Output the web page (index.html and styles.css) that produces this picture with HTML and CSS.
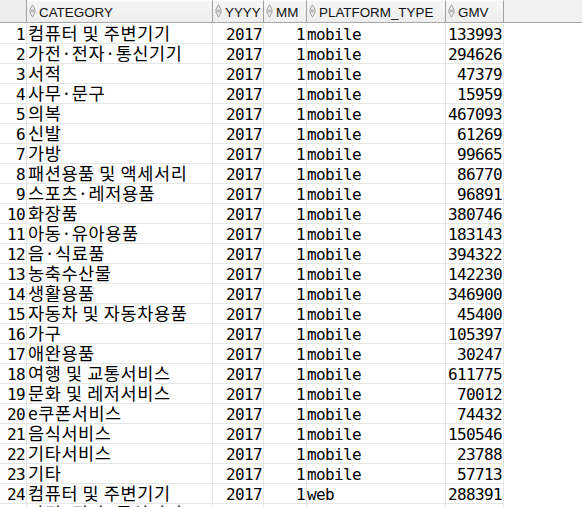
FILE: index.html
```html
<!DOCTYPE html>
<html>
<head>
<meta charset="utf-8">
<link rel="stylesheet" href="styles.css">
</head>
<body>
<div class="grid">
  <div class="head">
    <div class="hc hrn"></div>
    <div class="hc"><svg class="sort" viewBox="0 0 7 14" width="7" height="14"><path d="M3.5 0.8 L6.4 6.2 L0.6 6.2 Z M0.6 7.8 L6.4 7.8 L3.5 13.2 Z"/></svg><span class="hl">CATEGORY</span></div>
    <div class="hc"><svg class="sort" viewBox="0 0 7 14" width="7" height="14"><path d="M3.5 0.8 L6.4 6.2 L0.6 6.2 Z M0.6 7.8 L6.4 7.8 L3.5 13.2 Z"/></svg><span class="hl">YYYY</span></div>
    <div class="hc"><svg class="sort" viewBox="0 0 7 14" width="7" height="14"><path d="M3.5 0.8 L6.4 6.2 L0.6 6.2 Z M0.6 7.8 L6.4 7.8 L3.5 13.2 Z"/></svg><span class="hl">MM</span></div>
    <div class="hc"><svg class="sort" viewBox="0 0 7 14" width="7" height="14"><path d="M3.5 0.8 L6.4 6.2 L0.6 6.2 Z M0.6 7.8 L6.4 7.8 L3.5 13.2 Z"/></svg><span class="hl">PLATFORM_TYPE</span></div>
    <div class="hc"><svg class="sort" viewBox="0 0 7 14" width="7" height="14"><path d="M3.5 0.8 L6.4 6.2 L0.6 6.2 Z M0.6 7.8 L6.4 7.8 L3.5 13.2 Z"/></svg><span class="hl">GMV</span></div>
    <div class="hfill"></div>
  </div>
  <div class="body">
    <div class="row"><div class="c num">1</div><div class="c cat">컴퓨터 및 주변기기</div><div class="c num">2017</div><div class="c num">1</div><div class="c plat">mobile</div><div class="c num">133993</div></div>
    <div class="row"><div class="c num">2</div><div class="c cat">가전·전자·통신기기</div><div class="c num">2017</div><div class="c num">1</div><div class="c plat">mobile</div><div class="c num">294626</div></div>
    <div class="row"><div class="c num">3</div><div class="c cat">서적</div><div class="c num">2017</div><div class="c num">1</div><div class="c plat">mobile</div><div class="c num">47379</div></div>
    <div class="row"><div class="c num">4</div><div class="c cat">사무·문구</div><div class="c num">2017</div><div class="c num">1</div><div class="c plat">mobile</div><div class="c num">15959</div></div>
    <div class="row"><div class="c num">5</div><div class="c cat">의복</div><div class="c num">2017</div><div class="c num">1</div><div class="c plat">mobile</div><div class="c num">467093</div></div>
    <div class="row"><div class="c num">6</div><div class="c cat">신발</div><div class="c num">2017</div><div class="c num">1</div><div class="c plat">mobile</div><div class="c num">61269</div></div>
    <div class="row"><div class="c num">7</div><div class="c cat">가방</div><div class="c num">2017</div><div class="c num">1</div><div class="c plat">mobile</div><div class="c num">99665</div></div>
    <div class="row"><div class="c num">8</div><div class="c cat">패션용품 및 액세서리</div><div class="c num">2017</div><div class="c num">1</div><div class="c plat">mobile</div><div class="c num">86770</div></div>
    <div class="row"><div class="c num">9</div><div class="c cat">스포츠·레저용품</div><div class="c num">2017</div><div class="c num">1</div><div class="c plat">mobile</div><div class="c num">96891</div></div>
    <div class="row"><div class="c num">10</div><div class="c cat">화장품</div><div class="c num">2017</div><div class="c num">1</div><div class="c plat">mobile</div><div class="c num">380746</div></div>
    <div class="row"><div class="c num">11</div><div class="c cat">아동·유아용품</div><div class="c num">2017</div><div class="c num">1</div><div class="c plat">mobile</div><div class="c num">183143</div></div>
    <div class="row"><div class="c num">12</div><div class="c cat">음·식료품</div><div class="c num">2017</div><div class="c num">1</div><div class="c plat">mobile</div><div class="c num">394322</div></div>
    <div class="row"><div class="c num">13</div><div class="c cat">농축수산물</div><div class="c num">2017</div><div class="c num">1</div><div class="c plat">mobile</div><div class="c num">142230</div></div>
    <div class="row"><div class="c num">14</div><div class="c cat">생활용품</div><div class="c num">2017</div><div class="c num">1</div><div class="c plat">mobile</div><div class="c num">346900</div></div>
    <div class="row"><div class="c num">15</div><div class="c cat">자동차 및 자동차용품</div><div class="c num">2017</div><div class="c num">1</div><div class="c plat">mobile</div><div class="c num">45400</div></div>
    <div class="row"><div class="c num">16</div><div class="c cat">가구</div><div class="c num">2017</div><div class="c num">1</div><div class="c plat">mobile</div><div class="c num">105397</div></div>
    <div class="row"><div class="c num">17</div><div class="c cat">애완용품</div><div class="c num">2017</div><div class="c num">1</div><div class="c plat">mobile</div><div class="c num">30247</div></div>
    <div class="row"><div class="c num">18</div><div class="c cat">여행 및 교통서비스</div><div class="c num">2017</div><div class="c num">1</div><div class="c plat">mobile</div><div class="c num">611775</div></div>
    <div class="row"><div class="c num">19</div><div class="c cat">문화 및 레저서비스</div><div class="c num">2017</div><div class="c num">1</div><div class="c plat">mobile</div><div class="c num">70012</div></div>
    <div class="row"><div class="c num">20</div><div class="c cat">e쿠폰서비스</div><div class="c num">2017</div><div class="c num">1</div><div class="c plat">mobile</div><div class="c num">74432</div></div>
    <div class="row"><div class="c num">21</div><div class="c cat">음식서비스</div><div class="c num">2017</div><div class="c num">1</div><div class="c plat">mobile</div><div class="c num">150546</div></div>
    <div class="row"><div class="c num">22</div><div class="c cat">기타서비스</div><div class="c num">2017</div><div class="c num">1</div><div class="c plat">mobile</div><div class="c num">23788</div></div>
    <div class="row"><div class="c num">23</div><div class="c cat">기타</div><div class="c num">2017</div><div class="c num">1</div><div class="c plat">mobile</div><div class="c num">57713</div></div>
    <div class="row"><div class="c num">24</div><div class="c cat">컴퓨터 및 주변기기</div><div class="c num">2017</div><div class="c num">1</div><div class="c plat">web</div><div class="c num">288391</div></div>
    <div class="row"><div class="c num">25</div><div class="c cat">가전·전자·통신기기</div><div class="c num">2017</div><div class="c num">1</div><div class="c plat">web</div><div class="c num">287496</div></div>
  </div>
</div>
</body>
</html>
```
FILE: styles.css
```css
html, body {
  margin: 0;
  padding: 0;
  background: #ffffff;
  overflow: hidden;
}
.grid {
  width: 582px;
  height: 507px;
  overflow: hidden;
}
.head, .row {
  display: grid;
  grid-template-columns: 27px 186px 51px 43px 139px 58px 1fr;
}
.head {
  height: 23px;
  background: #f0f0f0;
  border-bottom: 1px solid #a8a8a8;
  box-sizing: border-box;
}
.hc {
  box-sizing: border-box;
  height: 22px;
  border-right: 1px solid #a0a0a0;
  border-top: 1px solid #fbfbfb;
  background: linear-gradient(#f6f6f6, #eeeeee);
  display: flex;
  align-items: flex-start;
  gap: 3px;
  padding-left: 2px;
  overflow: hidden;
}
.hrn {
  background: #ededed;
  border-top: none;
}
.sort {
  margin-top: 3px;
  flex: none;
}
.sort path {
  fill: #ececec;
  stroke: #a4a4a4;
  stroke-width: 1;
  stroke-linejoin: round;
}
.hl {
  font-family: "Liberation Sans", Arial, sans-serif;
  font-size: 13.4px;
  line-height: 22px;
  margin-top: 1px;
  color: #111;
  white-space: nowrap;
}
.body {
  padding-top: 1px;
}
.row {
  height: 20px;
}
.c {
  box-sizing: border-box;
  height: 20px;
  border-right: 1px solid #e6e6e6;
  border-bottom: 1px solid #e6e6e6;
  white-space: nowrap;
  color: #000;
}
.num, .plat {
  font-family: "DejaVu Sans Mono", monospace;
  font-size: 16px;
  letter-spacing: -0.63px;
  line-height: 21px;
}
.num {
  text-align: right;
  padding-right: 1px;
}
.plat {
  padding-left: 0;
}
.cat {
  font-family: "Noto Sans CJK KR", "Noto Sans", sans-serif;
  font-size: 17.5px;
  letter-spacing: 0.6px;
  line-height: 18px;
  padding-left: 1px;
}
```
